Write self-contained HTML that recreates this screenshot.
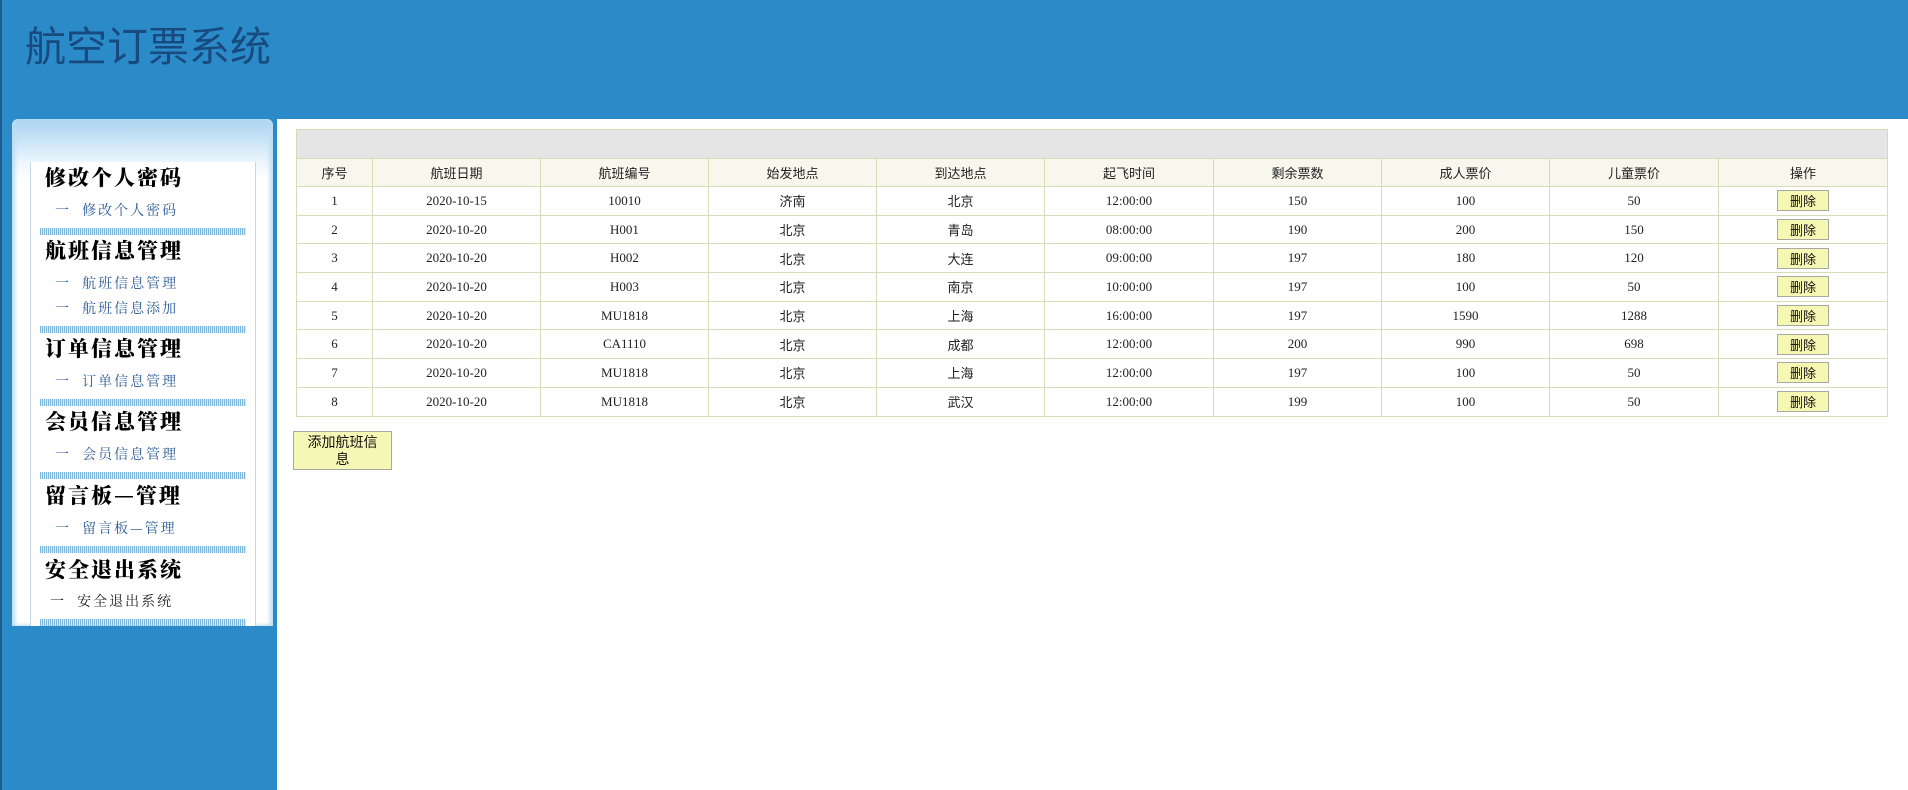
<!DOCTYPE html>
<html><head><meta charset="utf-8"><style>
*{margin:0;padding:0;box-sizing:border-box}
body{width:1908px;height:790px;background:#2b8bc8;position:relative;overflow:hidden;font-family:"Liberation Sans","Noto Sans CJK SC",sans-serif}
.edge{position:absolute;left:0;top:0;width:2px;height:790px;background:#1d5e8c}
.title{position:absolute;left:25px;top:22px;font-size:41px;color:#184a80;font-family:"Liberation Sans","Noto Sans CJK SC",sans-serif;line-height:50px}
.side{position:absolute;left:12px;top:119px;width:261px;height:507px;border-radius:6px 6px 0 0;background:linear-gradient(#a9d3f0 0px,#eef7fd 45px,#fff 60px);box-shadow:inset 3px 0 4px #bcdcf2,inset -3px 0 4px #bcdcf2}
.inner{position:absolute;left:30px;top:162px;width:226px;height:464px;border-left:1px solid #c6d9e6;border-right:1px solid #c6d9e6;background:#fff}
.h{position:absolute;left:45px;font-family:"Noto Serif CJK SC",serif;font-weight:900;font-size:21px;color:#000;letter-spacing:2px;line-height:26px}
.l{position:absolute;left:55px;font-family:"Noto Serif CJK SC",serif;font-size:14px;color:#2b5a96;letter-spacing:2px;line-height:18px}
.s{position:absolute;left:40px;width:206px;height:7px;background:repeating-linear-gradient(90deg,#7fb6dc 0 1px,#d8ebf7 1px 2px)}
.main{position:absolute;left:277px;top:119px;width:1631px;height:671px;background:#fff}
table{position:absolute;left:296px;top:129px;width:1591px;border-collapse:collapse;table-layout:fixed}
td,th{border:1px solid #d6dbb8;text-align:center;font-size:13px;color:#222;font-weight:normal}
td{font-family:"Liberation Serif","Noto Sans CJK SC",serif;height:28.7px}
th{font-family:"Liberation Sans","Noto Sans CJK SC",sans-serif;background:#f7f7ed;height:28px}
tr.cap td{background:#e5e5e5;height:29px}
.b{display:inline-block;width:52px;height:21px;background:#f5f7b2;border:1px solid #a8a8a0;font-family:"Noto Sans CJK SC",sans-serif;font-size:13px;line-height:19px;color:#111}
.add{position:absolute;left:293px;top:431px;width:99px;height:39px;background:#f5f7b5;border:1px solid #a8a8a0;font-size:14px;line-height:17px;text-align:center;color:#111;padding-top:2px;font-family:"Noto Sans CJK SC",sans-serif}
</style></head><body>
<div class="edge"></div>
<div class="title">航空订票系统</div>
<div class="side"></div>
<div class="inner"></div>
<div class="h" style="top:164px">修改个人密码</div>
<div class="l" style="top:201px">一&nbsp;&nbsp;修改个人密码</div>
<div class="s" style="top:228px"></div>
<div class="h" style="top:237px">航班信息管理</div>
<div class="l" style="top:274px">一&nbsp;&nbsp;航班信息管理</div>
<div class="l" style="top:299px">一&nbsp;&nbsp;航班信息添加</div>
<div class="s" style="top:326px"></div>
<div class="h" style="top:335px">订单信息管理</div>
<div class="l" style="top:372px">一&nbsp;&nbsp;订单信息管理</div>
<div class="s" style="top:399px"></div>
<div class="h" style="top:408px">会员信息管理</div>
<div class="l" style="top:445px">一&nbsp;&nbsp;会员信息管理</div>
<div class="s" style="top:472px"></div>
<div class="h" style="top:482px">留言板—管理</div>
<div class="l" style="top:519px">一&nbsp;&nbsp;留言板—管理</div>
<div class="s" style="top:546px"></div>
<div class="h" style="top:556px">安全退出系统</div>
<div class="l" style="top:592px;left:50px;color:#222">一&nbsp;&nbsp;安全退出系统</div>
<div class="s" style="top:619px"></div>
<div class="main"></div>
<table>
<colgroup><col style="width:76px"><col style="width:168px"><col style="width:168px"><col style="width:168px"><col style="width:168px"><col style="width:169px"><col style="width:168px"><col style="width:168px"><col style="width:169px"><col style="width:169px"></colgroup>
<tr class="cap"><td colspan="10"></td></tr>
<tr><th>序号</th><th>航班日期</th><th>航班编号</th><th>始发地点</th><th>到达地点</th><th>起飞时间</th><th>剩余票数</th><th>成人票价</th><th>儿童票价</th><th>操作</th></tr>
<tr><td>1</td><td>2020-10-15</td><td>10010</td><td>济南</td><td>北京</td><td>12:00:00</td><td>150</td><td>100</td><td>50</td><td><span class="b">删除</span></td></tr>
<tr><td>2</td><td>2020-10-20</td><td>H001</td><td>北京</td><td>青岛</td><td>08:00:00</td><td>190</td><td>200</td><td>150</td><td><span class="b">删除</span></td></tr>
<tr><td>3</td><td>2020-10-20</td><td>H002</td><td>北京</td><td>大连</td><td>09:00:00</td><td>197</td><td>180</td><td>120</td><td><span class="b">删除</span></td></tr>
<tr><td>4</td><td>2020-10-20</td><td>H003</td><td>北京</td><td>南京</td><td>10:00:00</td><td>197</td><td>100</td><td>50</td><td><span class="b">删除</span></td></tr>
<tr><td>5</td><td>2020-10-20</td><td>MU1818</td><td>北京</td><td>上海</td><td>16:00:00</td><td>197</td><td>1590</td><td>1288</td><td><span class="b">删除</span></td></tr>
<tr><td>6</td><td>2020-10-20</td><td>CA1110</td><td>北京</td><td>成都</td><td>12:00:00</td><td>200</td><td>990</td><td>698</td><td><span class="b">删除</span></td></tr>
<tr><td>7</td><td>2020-10-20</td><td>MU1818</td><td>北京</td><td>上海</td><td>12:00:00</td><td>197</td><td>100</td><td>50</td><td><span class="b">删除</span></td></tr>
<tr><td>8</td><td>2020-10-20</td><td>MU1818</td><td>北京</td><td>武汉</td><td>12:00:00</td><td>199</td><td>100</td><td>50</td><td><span class="b">删除</span></td></tr>
</table>
<div class="add">添加航班信<br>息</div>
</body></html>
